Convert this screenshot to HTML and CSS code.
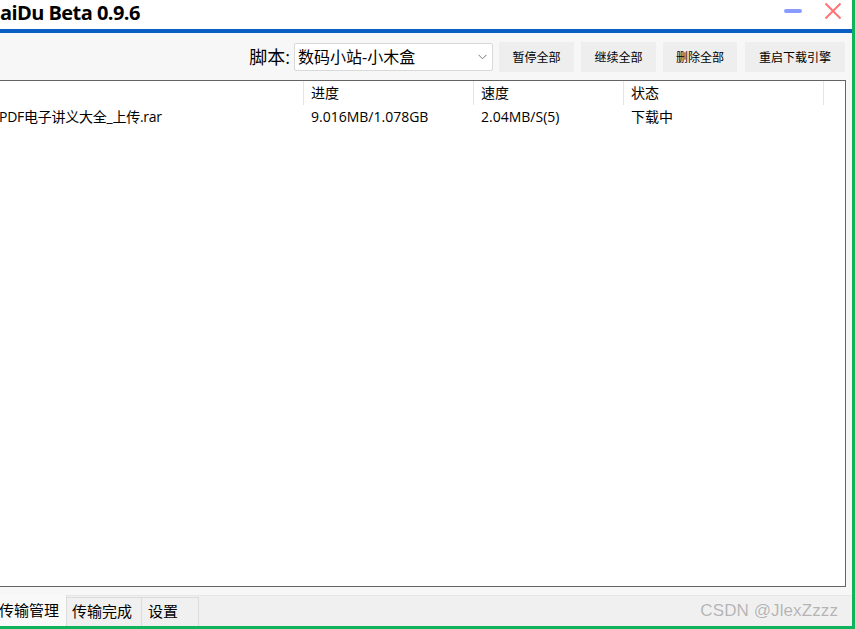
FILE: index.html
```html
<!DOCTYPE html>
<html lang="zh">
<head>
<meta charset="utf-8">
<title>BaiDu Beta 0.9.6</title>
<link rel="stylesheet" href="styles.css">
</head>
<body>
<div class="frame">
  <div class="window">
    <header class="titlebar">
      <span class="title">BaiDu Beta 0.9.6</span>
      <div class="controls">
        <span class="min-btn"></span>
        <svg class="close-btn" width="18" height="18" viewBox="0 0 18 18">
          <path d="M1.5 1.5 L16.5 16.5 M16.5 1.5 L1.5 16.5" stroke="#ff7474" stroke-width="2" fill="none"/>
        </svg>
      </div>
    </header>
    <div class="accent"></div>
    <div class="toolbar">
      <span class="label">脚本:</span>
      <div class="combo">
        <span class="combo-text">数码小站-小木盒</span>
        <svg class="chev" width="9" height="6" viewBox="0 0 9 6"><path d="M0.5 0.8 L4.5 4.8 L8.5 0.8" stroke="#777" stroke-width="1" fill="none"/></svg>
      </div>
      <button class="btn w75">暂停全部</button>
      <button class="btn w75">继续全部</button>
      <button class="btn w74">删除全部</button>
      <button class="btn w100">重启下载引擎</button>
    </div>
    <div class="table">
      <div class="row head">
        <div class="cell"></div>
        <div class="cell">进度</div>
        <div class="cell">速度</div>
        <div class="cell">状态</div>
        <div class="cell last"></div>
      </div>
      <div class="row data">
        <div class="cell name">PDF电子讲义大全_上传.rar</div>
        <div class="cell">9.016MB/1.078GB</div>
        <div class="cell">2.04MB/S(5)</div>
        <div class="cell">下载中</div>
        <div class="cell"></div>
      </div>
    </div>
    <div class="bottom">
      <div class="tabs">
        <div class="tab active">传输管理</div>
        <div class="tab">传输完成</div>
        <div class="tab short">设置</div>
        <span class="watermark">CSDN @JlexZzzz</span>
      </div>
    </div>
  </div>
</div>
</body>
</html>
```
FILE: styles.css
```css
html, body {
  margin: 0;
  padding: 0;
  background: #ffffff;
}
body {
  width: 855px;
  height: 629px;
  overflow: hidden;
  font-family: "Open Sans", "Noto Sans CJK SC", sans-serif;
  color: #000;
}
.frame {
  width: 855px;
  height: 629px;
  box-sizing: border-box;
  border-right: 3px solid #0fb35c;
  border-bottom: 3px solid #0fb35c;
  overflow: hidden;
}
.window {
  margin-left: -16px;
  width: 868px;
  height: 626px;
  display: flex;
  flex-direction: column;
  background: #f7f7f7;
}
.titlebar {
  height: 29px;
  background: #ffffff;
  display: flex;
  align-items: flex-start;
  flex: none;
}
.title {
  font-family: "Open Sans", "Noto Sans CJK SC", sans-serif;
  font-weight: 700;
  font-size: 20px;
  line-height: 26px;
  padding-left: 3px;
  letter-spacing: -0.55px;
}
.controls {
  margin-left: auto;
  display: flex;
  align-items: flex-start;
  padding-right: 10px;
}
.min-btn {
  display: block;
  width: 18px;
  height: 4px;
  border-radius: 2px;
  background: #8a9cff;
  margin-top: 9px;
  margin-right: 22px;
}
.close-btn {
  display: block;
  margin-top: 2px;
}
.accent {
  height: 4px;
  background: #0a5fc4;
  flex: none;
}
.toolbar {
  height: 47px;
  flex: none;
  display: flex;
  align-items: center;
  justify-content: flex-end;
  padding-right: 7px;
  box-sizing: border-box;
}
.label {
  font-size: 18px;
  line-height: 24px;
  margin-right: 4px;
}
.combo {
  width: 199px;
  height: 28px;
  box-sizing: border-box;
  border: 1px solid #d9d9d9;
  border-radius: 2px;
  background: #ffffff;
  display: flex;
  align-items: center;
  padding-left: 3px;
  padding-right: 5px;
  margin-right: 6px;
}
.combo-text {
  font-size: 16px;
  line-height: 20px;
  flex: 1;
}
.chev {
  display: block;
}
.btn {
  height: 30px;
  border: none;
  background: #eeeeee;
  font-family: "Open Sans", "Noto Sans CJK SC", sans-serif;
  font-size: 12px;
  color: #000;
  padding: 0;
  margin-left: 7px;
}
.btn.w75 { width: 75px; }
.btn.w74 { width: 74px; margin-left: 7px; }
.btn.w100 { width: 100px; margin-left: 8px; }
.toolbar .combo + .btn { margin-left: 0; }
.table {
  flex: 1;
  margin: 0 6px 0 7px;
  border: 1px solid #646464;
  background: #ffffff;
  min-height: 0;
}
.row {
  display: grid;
  grid-template-columns: 312px 170px 150px 200px 1fr;
}
.cell {
  font-size: 14px;
  padding-left: 7px;
  white-space: nowrap;
  overflow: hidden;
}
.cell.name {
  letter-spacing: -0.25px;
}
.head {
  height: 24px;
}
.head .cell {
  line-height: 24px;
  border-right: 1px solid #e5e5e5;
}
.head .cell.last {
  border-right: none;
}
.data .cell {
  line-height: 24px;
}
.bottom {
  height: 39px;
  flex: none;
  padding-top: 8px;
  box-sizing: border-box;
}
.tabs {
  height: 31px;
  border-top: 1px solid #e6e6e6;
  background: #f0f0f0;
  display: flex;
  align-items: flex-end;
  box-sizing: border-box;
  padding-left: 7px;
}
.tab {
  height: 29px;
  box-sizing: border-box;
  border: 1px solid #dcdcdc;
  border-bottom: none;
  border-left: none;
  font-size: 15px;
  line-height: 26px;
  padding-left: 5px;
  width: 75px;
  background: #f0f0f0;
}
.tab.active {
  height: 31px;
  width: 76px;
  padding-left: 8px;
  background: #f9f9f9;
  border: none;
  border-right: 1px solid #dcdcdc;
  line-height: 31px;
  margin-top: -1px;
}
.tab.short {
  width: 57px;
  padding-left: 6px;
}
.watermark {
  margin-left: auto;
  margin-right: 14px;
  align-self: center;
  font-family: "Liberation Sans", Arial, sans-serif;
  font-size: 17px;
  color: #b4b4b4;
  text-shadow: 0 0 1px #ffffff;
  letter-spacing: 0.1px;
}
```
